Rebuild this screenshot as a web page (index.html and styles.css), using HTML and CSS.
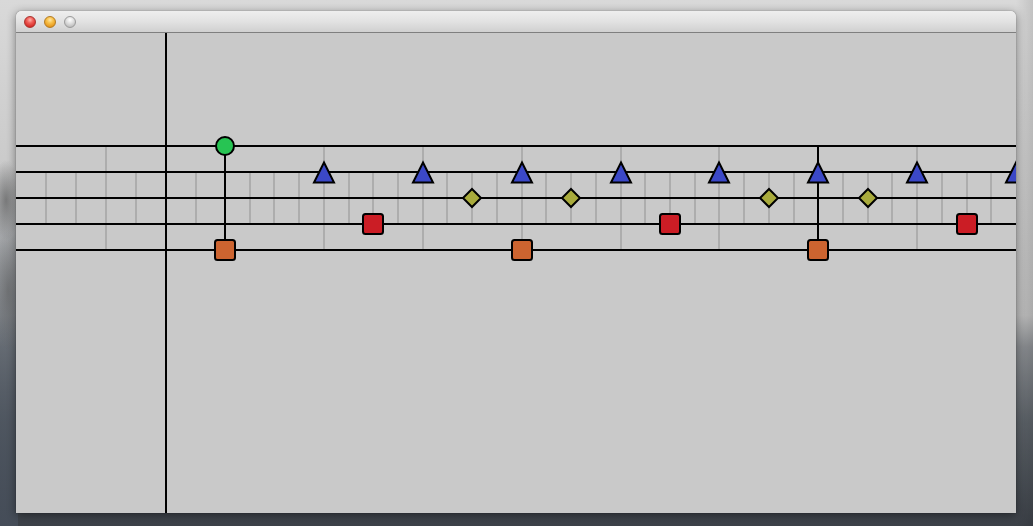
FILE: index.html
```html
<!DOCTYPE html>
<html>
<head>
<meta charset="utf-8">
<title>Sequencer</title>
<link rel="stylesheet" href="styles.css">
</head>
<body>
<div class="desktop">
  <div class="tree"></div>
  <div class="window">
    <div class="titlebar">
      <span class="light close"></span>
      <span class="light minimize"></span>
      <span class="light zoom"></span>
    </div>
    <div class="content">
      <svg class="canvas" width="1000" height="480" viewBox="0 0 1000 480">
        <defs>
          <rect id="sq" x="-10" y="-10" width="20" height="20" rx="2.5" ry="2.5"/>
          <polygon id="tri" points="0,-9.5 10,10.5 -10,10.5"/>
          <polygon id="dia" points="0,-9 9,0 0,9 -9,0"/>
        </defs>
        <g class="grid">
          <line x1="30" y1="139" x2="30" y2="191"/>
          <line x1="60" y1="139" x2="60" y2="191"/>
          <line x1="90" y1="113" x2="90" y2="217"/>
          <line x1="120" y1="139" x2="120" y2="191"/>
          <line x1="180" y1="139" x2="180" y2="191"/>
          <line x1="234" y1="139" x2="234" y2="191"/>
          <line x1="258" y1="139" x2="258" y2="191"/>
          <line x1="283" y1="139" x2="283" y2="191"/>
          <line x1="308" y1="113" x2="308" y2="217"/>
          <line x1="333" y1="139" x2="333" y2="191"/>
          <line x1="357" y1="139" x2="357" y2="191"/>
          <line x1="382" y1="139" x2="382" y2="191"/>
          <line x1="407" y1="113" x2="407" y2="217"/>
          <line x1="431" y1="139" x2="431" y2="191"/>
          <line x1="456" y1="139" x2="456" y2="191"/>
          <line x1="481" y1="139" x2="481" y2="191"/>
          <line x1="506" y1="113" x2="506" y2="217"/>
          <line x1="530" y1="139" x2="530" y2="191"/>
          <line x1="555" y1="139" x2="555" y2="191"/>
          <line x1="580" y1="139" x2="580" y2="191"/>
          <line x1="605" y1="113" x2="605" y2="217"/>
          <line x1="629" y1="139" x2="629" y2="191"/>
          <line x1="654" y1="139" x2="654" y2="191"/>
          <line x1="679" y1="139" x2="679" y2="191"/>
          <line x1="703" y1="113" x2="703" y2="217"/>
          <line x1="728" y1="139" x2="728" y2="191"/>
          <line x1="753" y1="139" x2="753" y2="191"/>
          <line x1="778" y1="139" x2="778" y2="191"/>
          <line x1="827" y1="139" x2="827" y2="191"/>
          <line x1="852" y1="139" x2="852" y2="191"/>
          <line x1="876" y1="139" x2="876" y2="191"/>
          <line x1="901" y1="113" x2="901" y2="217"/>
          <line x1="926" y1="139" x2="926" y2="191"/>
          <line x1="951" y1="139" x2="951" y2="191"/>
          <line x1="975" y1="139" x2="975" y2="191"/>
        </g>
        <g class="ink">
          <line x1="0" y1="113" x2="1000" y2="113"/>
          <line x1="0" y1="139" x2="1000" y2="139"/>
          <line x1="0" y1="165" x2="1000" y2="165"/>
          <line x1="0" y1="191" x2="1000" y2="191"/>
          <line x1="0" y1="217" x2="1000" y2="217"/>
          <line x1="150" y1="0" x2="150" y2="480"/>
          <line x1="209" y1="113" x2="209" y2="217"/>
          <line x1="802" y1="113" x2="802" y2="217"/>
        </g>
        <g class="node orange">
          <use href="#sq" x="209" y="217"/>
          <use href="#sq" x="506" y="217"/>
          <use href="#sq" x="802" y="217"/>
        </g>
        <g class="node red">
          <use href="#sq" x="357" y="191"/>
          <use href="#sq" x="654" y="191"/>
          <use href="#sq" x="951" y="191"/>
        </g>
        <g class="node olive">
          <use href="#dia" x="456" y="165"/>
          <use href="#dia" x="555" y="165"/>
          <use href="#dia" x="753" y="165"/>
          <use href="#dia" x="852" y="165"/>
        </g>
        <g class="node blue">
          <use href="#tri" x="308" y="139"/>
          <use href="#tri" x="407" y="139"/>
          <use href="#tri" x="506" y="139"/>
          <use href="#tri" x="605" y="139"/>
          <use href="#tri" x="703" y="139"/>
          <use href="#tri" x="802" y="139"/>
          <use href="#tri" x="901" y="139"/>
          <use href="#tri" x="1000" y="139"/>
        </g>
        <circle class="node green" cx="209" cy="113" r="9"/>
      </svg>
    </div>
  </div>
</div>
</body>
</html>
```

FILE: styles.css
```css
html, body {
  margin: 0;
  padding: 0;
  width: 1033px;
  height: 526px;
  overflow: hidden;
}

.desktop {
  position: relative;
  width: 1033px;
  height: 526px;
  box-sizing: border-box;
  padding: 11px 0 0 16px;
  background:
    linear-gradient(90deg, rgba(0,0,0,0) 0, rgba(0,0,0,0) 1016px, rgba(0,0,0,0.10) 1033px),
    linear-gradient(180deg, #d9d9d9 0%, #cbcbcb 30%, #bdbdbd 60%, #8a8d91 66%, #5c6268 80%, #3c4148 100%);
  font-family: "Liberation Sans", Arial, sans-serif;
}

.tree {
  position: absolute;
  left: 0;
  top: 160px;
  width: 18px;
  height: 366px;
  background:
    radial-gradient(ellipse 14px 40px at 6px 40px, rgba(70,70,70,0.55), rgba(70,70,70,0) 100%),
    radial-gradient(ellipse 14px 60px at 8px 130px, rgba(80,80,80,0.45), rgba(80,80,80,0) 100%),
    linear-gradient(180deg, rgba(80,88,98,0) 0%, rgba(80,88,98,0.6) 45%, rgba(70,78,90,0.9) 100%);
}

.window {
  position: relative;
  width: 1000px;
  border-radius: 5px 5px 0 0;
  box-shadow: 0 2px 10px rgba(0, 0, 0, 0.45), 0 0 1px rgba(0, 0, 0, 0.5);
  overflow: hidden;
}

.titlebar {
  height: 21px;
  border-bottom: 1px solid #7f7f7f;
  background: linear-gradient(180deg, #eeeeee 0%, #e2e2e2 50%, #d0d0d0 100%);
  display: flex;
  align-items: center;
  gap: 8px;
  padding-left: 8px;
  border-radius: 5px 5px 0 0;
}

.light {
  width: 12px;
  height: 12px;
  border-radius: 50%;
  box-sizing: border-box;
  margin-top: 1px;
}

.close {
  background: radial-gradient(circle at 50% 30%, #ffb3ad 0, #f0605a 35%, #d72f2a 75%, #b01e1a 100%);
  border: 1px solid #a8322e;
}

.minimize {
  background: radial-gradient(circle at 50% 30%, #ffe7a8 0, #f8c24c 35%, #e89a1f 75%, #c47b14 100%);
  border: 1px solid #b27b22;
}

.zoom {
  background: radial-gradient(circle at 50% 30%, #ffffff 0, #e0e0e0 40%, #bdbdbd 80%, #a8a8a8 100%);
  border: 1px solid #9a9a9a;
}

.content {
  width: 1000px;
  height: 480px;
  background: #c9c9c9;
}

.canvas {
  display: block;
}

.grid line {
  stroke: #adadad;
  stroke-width: 2;
}

.ink line {
  stroke: #000000;
  stroke-width: 2;
}

.node {
  stroke: #000000;
  stroke-width: 2;
}

.orange { fill: #cc6430; }
.red { fill: #cb1d25; }
.olive { fill: #a9ab3c; }
.blue { fill: #3b48c7; }
.green { fill: #27c453; }
```
